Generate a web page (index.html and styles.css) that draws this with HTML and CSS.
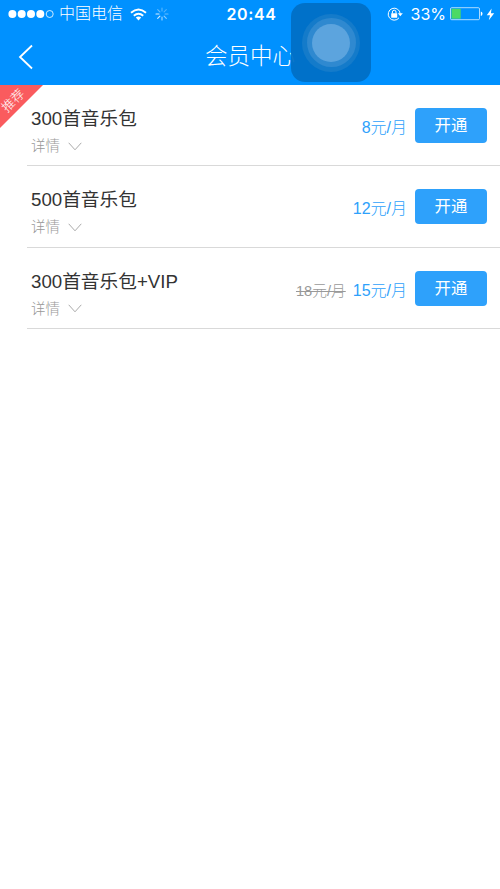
FILE: index.html
```html
<!DOCTYPE html>
<html lang="zh-CN">
<head>
<meta charset="UTF-8">
<title>会员中心</title>
<link rel="stylesheet" href="styles.css">
</head>
<body>
<header class="header">
  <div class="status">
    <div class="status-left">
      <svg class="signal" width="46" height="10" viewBox="0 0 46 10"><g fill="#fff"><circle cx="4.4" cy="5" r="4"/><circle cx="13.7" cy="5" r="4"/><circle cx="23" cy="5" r="4"/><circle cx="32.3" cy="5" r="4"/></g><circle cx="41.7" cy="5" r="3.5" fill="none" stroke="#fff" stroke-width=".8"/></svg>
      <span class="carrier">中国电信</span>
      <svg class="wifi" width="17" height="13" viewBox="0 0 17 13"><g fill="none" stroke="#fff" stroke-width="1.9"><path d="M1 4.8Q8.5-1.8 16 4.8"/><path d="M3.8 7.8Q8.5 3.6 13.2 7.8"/></g><path d="M5.8 9.6Q8.5 7.3 11.2 9.6L8.5 12.5Z" fill="#fff"/></svg>
      <svg class="spinner" width="14" height="14" viewBox="-7 -7 14 14"><g stroke="#fff" stroke-width="1.1" stroke-linecap="round"><path d="M0-3V-6" opacity=".35"/><path d="M2.1-2.1L4.3-4.3" opacity=".3"/><path d="M3 0H6" opacity=".4"/><path d="M2.1 2.1L4.3 4.3" opacity=".55"/><path d="M0 3V6" opacity=".65"/><path d="M-2.1 2.1L-4.3 4.3" opacity=".85"/><path d="M-3 0H-6" opacity=".85"/><path d="M-2.1-2.1L-4.3-4.3" opacity=".4"/></g></svg>
    </div>
    <span class="time">20:44</span>
    <div class="status-right">
      <svg class="lock" width="17" height="14" viewBox="0 0 17 14"><path d="M12 10.8A6 6 0 1 1 13.2 6.8" fill="none" stroke="#fff" stroke-width="1"/><path d="M10.8 6.3H15.8L13.3 9.3Z" fill="#fff"/><rect x="4.2" y="6.3" width="6" height="4.4" rx=".5" fill="#fff"/><path d="M5.4 6.5V5a1.8 1.8 0 0 1 3.6 0V6.5" fill="none" stroke="#fff"/></svg>
      <span class="percent">33%</span>
      <svg class="battery" width="33" height="14" viewBox="0 0 33 14"><rect x=".5" y=".7" width="29" height="12" rx="1.2" fill="none" stroke="#fff" stroke-width=".8" opacity=".85"/><rect x="1.5" y="1.7" width="9.2" height="10" fill="#4cd964"/><path d="M30.8 4.5Q32.5 5 32.5 6.7T30.8 8.9Z" fill="#fff"/></svg>
      <svg class="bolt" width="9" height="13" viewBox="0 0 9 13"><path d="M5.6.6L.8 7.2H4L2.8 12.3L8.2 5.3H4.9Z" fill="#fff"/></svg>
    </div>
  </div>
  <div class="nav">
    <svg class="back" width="16" height="26" viewBox="0 0 16 26"><path d="M14 1.5L2 13L14 24.5" fill="none" stroke="#fff" stroke-width="1.8"/></svg>
    <h1 class="title">会员中心</h1>
  </div>
</header>
<main class="list">
  <section class="row">
    <div class="info"><h2 class="name">300首音乐包</h2><div class="detail">详情<svg class="chevron" width="14" height="9" viewBox="0 0 14 9"><path d="M.7.8L7 7.8L13.3.8"/></svg></div></div>
    <span class="price">8元/月</span>
    <button class="open">开通</button>
  </section>
  <section class="row">
    <div class="info"><h2 class="name">500首音乐包</h2><div class="detail">详情<svg class="chevron" width="14" height="9" viewBox="0 0 14 9"><path d="M.7.8L7 7.8L13.3.8"/></svg></div></div>
    <span class="price">12元/月</span>
    <button class="open">开通</button>
  </section>
  <section class="row">
    <div class="info"><h2 class="name">300首音乐包+VIP</h2><div class="detail">详情<svg class="chevron" width="14" height="9" viewBox="0 0 14 9"><path d="M.7.8L7 7.8L13.3.8"/></svg></div></div>
    <s class="old-price">18元/月</s>
    <span class="price">15元/月</span>
    <button class="open">开通</button>
  </section>
  <div class="ribbon"><span class="ribbon-text">推荐</span></div>
</main>
<div class="assistive"><div class="ring"><div class="ring-mid"><div class="ring-core"></div></div></div></div>
</body>
</html>
```
FILE: styles.css
```css
* { box-sizing: border-box; }
body {
  margin: 0;
  min-height: 889px;
  background: #fff;
  font-family: "Liberation Sans", "Noto Sans CJK SC", sans-serif;
}
svg { display: block; flex: none; }
.header { height: 85px; background: #0091ff; color: #fff; }
.status {
  height: 28px;
  display: grid;
  grid-template-columns: 1fr auto 1fr;
  align-items: center;
  padding: 0 5px 0 8px;
}
.status-left, .status-right { display: flex; align-items: center; }
.status-right { justify-content: flex-end; }
.carrier { margin-left: 5px; font-size: 16px; line-height: 24px; font-weight: 300; }
.wifi { margin-left: 7px; }
.spinner { margin-left: 8px; }
.time { font: 600 16px/24px Inter, sans-serif; letter-spacing: 0.6px; }
.percent { margin-left: 7px; font: 400 16px/24px Inter, sans-serif; }
.battery { margin-left: 4px; }
.bolt { margin-left: 3px; }
.nav {
  height: 57px;
  display: grid;
  grid-template-columns: 1fr auto 1fr;
  align-items: center;
  padding-left: 18px;
  padding-right: 18px;
}
.title { margin: 0; font-size: 22.5px; line-height: 34px; font-weight: 300; }
.list { position: relative; }
.row {
  height: 81.3px;
  margin-left: 27px;
  padding: 0 13px 0 4px;
  display: flex;
  align-items: flex-start;
  border-bottom: 1px solid #d9d9d9;
}
.info { flex: 1; padding-top: 20px; }
.name { margin: 0; font-size: 18.7px; line-height: 28px; font-weight: 400; color: #333; white-space: nowrap; }
.detail {
  display: flex;
  align-items: center;
  gap: 8px;
  font-size: 14.5px;
  line-height: 26px;
  font-weight: 300;
  color: #999;
}
.chevron { fill: none; stroke: #aaa; stroke-width: 1; }
.price, .old-price { margin-top: 31px; line-height: 24px; white-space: nowrap; font-weight: 300; }
.price { font-size: 16px; color: #2ea1fb; }
.old-price { margin-right: 7px; font-size: 14.7px; color: #999; }
.open {
  width: 72px;
  height: 35px;
  margin: 23px 0 0 8px;
  padding: 0;
  border: 0;
  border-radius: 4px;
  background: #2ea1fb;
  color: #fff;
  font-family: inherit;
  font-size: 16.4px;
  line-height: 35px;
}
.ribbon {
  position: absolute;
  top: 0;
  left: 0;
  width: 43px;
  height: 43px;
  background: #fa5b5e;
  clip-path: polygon(0 0, 100% 0, 0 100%);
}
.ribbon-text {
  position: absolute;
  left: 0;
  top: 6px;
  width: 27px;
  text-align: center;
  font-size: 13px;
  line-height: 20px;
  font-weight: 300;
  color: #fff;
  transform: rotate(-45deg);
}
.assistive {
  position: absolute;
  left: 291px;
  top: 3px;
  width: 80px;
  height: 79px;
  border-radius: 14px;
  background: rgba(0, 112, 198, 0.95);
  display: grid;
  place-items: center;
}
.ring, .ring-mid, .ring-core { border-radius: 50%; display: grid; place-items: center; }
.ring { width: 58px; height: 58px; background: #147bca; }
.ring-mid { width: 49px; height: 49px; background: #2f89d0; }
.ring-core { width: 38px; height: 38px; background: #5ca4de; }
```
